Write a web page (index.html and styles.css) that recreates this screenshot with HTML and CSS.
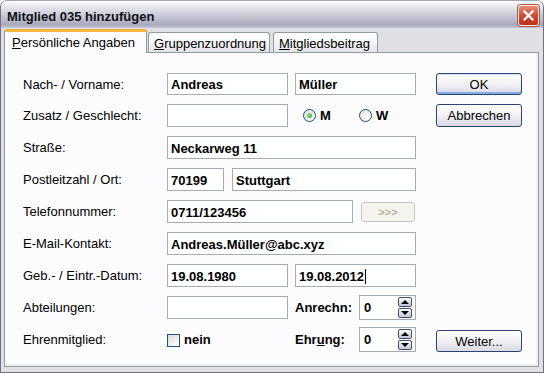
FILE: index.html
```html
<!DOCTYPE html>
<html lang="de">
<head>
    <meta charset="UTF-8">
    <title>Mitglied 035 hinzufügen</title>
    <link rel="stylesheet" href="styles.css">
</head>
<body>
<div class="window">
    <div class="titlebar">
        <span class="title">Mitglied 035 hinzufügen</span>
        <span class="close">
            <svg width="13" height="13" viewBox="0 0 13 13"><path d="M2.5 2.5L10.5 10.5M10.5 2.5L2.5 10.5" stroke="#fff" stroke-width="2.2" stroke-linecap="square"/></svg>
        </span>
    </div>
    <div class="client">
        <div class="tabs">
            <div class="tab active"><u>P</u>ersönliche Angaben</div>
            <div class="tab tab-groups"><u>G</u>ruppenzuordnung</div>
            <div class="tab tab-fee"><u>M</u>itgliedsbeitrag</div>
        </div>
        <div class="panel">
            <div class="form">
                <div class="row first">
                    <span class="label">Nach- / Vorname:</span>
                    <div class="fields">
                        <span class="field half">Andreas</span>
                        <span class="field half">Müller</span>
                    </div>
                </div>
                <div class="row">
                    <span class="label">Zusatz / Geschlecht:</span>
                    <div class="fields">
                        <span class="field half"></span>
                        <span class="radio-group">
                            <span class="option option-m"><span class="radio checked"></span>M</span>
                            <span class="option"><span class="radio"></span>W</span>
                        </span>
                    </div>
                </div>
                <div class="row">
                    <span class="label">Straße:</span>
                    <div class="fields"><span class="field full">Neckarweg 11</span></div>
                </div>
                <div class="row">
                    <span class="label">Postleitzahl / Ort:</span>
                    <div class="fields gap8">
                        <span class="field zip">70199</span>
                        <span class="field city">Stuttgart</span>
                    </div>
                </div>
                <div class="row">
                    <span class="label">Telefonnummer:</span>
                    <div class="fields gap8">
                        <span class="field phone">0711/123456</span>
                        <span class="mini-btn">&gt;&gt;&gt;</span>
                    </div>
                </div>
                <div class="row">
                    <span class="label">E-Mail-Kontakt:</span>
                    <div class="fields"><span class="field full">Andreas.Müller@abc.xyz</span></div>
                </div>
                <div class="row">
                    <span class="label">Geb.- / Eintr.-Datum:</span>
                    <div class="fields">
                        <span class="field half">19.08.1980</span>
                        <span class="field half">19.08.2012<span class="caret"></span></span>
                    </div>
                </div>
                <div class="row">
                    <span class="label">Abteilungen:</span>
                    <div class="fields tight">
                        <span class="cell"><span class="field half"></span></span>
                        <span class="side-label">Anrechn:</span>
                        <span class="spin">0<span class="arrows"><span class="arrow up"></span><span class="arrow down"></span></span></span>
                    </div>
                </div>
                <div class="row">
                    <span class="label">Ehrenmitglied:</span>
                    <div class="fields tight">
                        <span class="cell"><span class="checkbox"></span><b>nein</b></span>
                        <span class="side-label">Ehr<u>u</u>ng:</span>
                        <span class="spin">0<span class="arrows"><span class="arrow up"></span><span class="arrow down"></span></span></span>
                    </div>
                </div>
            </div>
            <div class="buttons">
                <span class="btn default">OK</span>
                <span class="btn">Abbrechen</span>
                <span class="btn next">Weiter...</span>
            </div>
        </div>
    </div>
</div>
</body>
</html>
```

FILE: styles.css
```css
* {
    box-sizing: border-box;
}
body {
    margin: 0;
    font-family: "Liberation Sans", Arial, sans-serif;
    font-size: 13px;
    color: #000;
    background: #fff;
}
.window {
    width: 544px;
    height: 373px;
    display: flex;
    flex-direction: column;
    background: #e0dfe3;
    border: 1px solid #6f6f86;
    border-top-color: #a4a4b6;
    border-radius: 7px 7px 0 0;
    overflow: hidden;
}
.titlebar {
    height: 27px;
    flex: none;
    display: flex;
    align-items: flex-start;
    justify-content: space-between;
    padding: 0 4px 0 6px;
    background: linear-gradient(#fdfdfe, #e6e6ed 22%, #c6c6d3 58%, #a9a9bc 88%, #c6c6d3);
}
.title {
    font-weight: bold;
    color: #101018;
    margin-top: 9px;
    line-height: 14px;
}
.close {
    width: 21px;
    height: 21px;
    margin-top: 4px;
    border: 1px solid #fbe6e0;
    border-radius: 3px;
    background: linear-gradient(#e78e79, #cf4c36 50%, #b9301d);
    box-shadow: 0 0 0 1px #b65242;
    display: flex;
    align-items: center;
    justify-content: center;
}
.client {
    flex: 1;
    display: flex;
    flex-direction: column;
    padding: 1px 4px 5px 3px;
}
.tabs {
    height: 23px;
    display: flex;
    align-items: flex-end;
}
.tab {
    height: 20px;
    display: flex;
    align-items: center;
    padding: 1px 0 0 5px;
    border: 1px solid #919b9c;
    border-bottom: none;
    border-radius: 3px 3px 0 0;
    background: linear-gradient(#fff, #f3f3f6 60%, #e2e2e8);
}
.tab.active {
    width: 143px;
    height: 24px;
    margin-bottom: -1px;
    padding: 0 0 0 7px;
    border-top: 3px solid #f0b63e;
    background: #fcfcfe;
    position: relative;
}
.tab-groups {
    width: 122px;
    margin-left: 1px;
}
.tab-fee {
    width: 105px;
    margin-left: 3px;
}
.panel {
    flex: 1;
    display: flex;
    align-items: stretch;
    padding: 20px 0 0 18px;
    background: #fcfcfe;
    border: 1px solid #919b9c;
    box-shadow: inset -2px -2px 0 #efeff3;
}
.form {
    display: flex;
    flex-direction: column;
    gap: 9px;
}
.row {
    height: 23px;
    display: flex;
    align-items: center;
}
.row.first {
    height: 22px;
}
.label {
    width: 144px;
    flex: none;
}
.fields {
    width: 249px;
    height: 100%;
    display: flex;
    align-items: center;
    gap: 7px;
}
.fields.gap8 {
    gap: 8px;
}
.fields.tight {
    gap: 0;
}
.field {
    height: 100%;
    display: flex;
    align-items: center;
    padding: 1px 3px 0;
    border: 1px solid #a5acb5;
    background: #fff;
    font-weight: bold;
    white-space: nowrap;
}
.half {
    width: 121px;
}
.full {
    width: 249px;
}
.zip {
    width: 57px;
}
.city {
    width: 184px;
}
.phone {
    width: 186px;
}
.caret {
    width: 1px;
    height: 15px;
    margin-left: 1px;
    background: #000;
}
.mini-btn {
    width: 54px;
    height: 20px;
    display: flex;
    align-items: center;
    justify-content: center;
    border: 1px solid #cac8bb;
    border-radius: 3px;
    background: #f4f3ee;
    color: #b3b0a2;
    font-size: 11px;
    font-weight: bold;
}
.radio-group {
    display: flex;
    align-items: center;
    margin-left: 8px;
    font-weight: bold;
}
.option {
    display: flex;
    align-items: center;
    gap: 4px;
}
.option-m {
    width: 56px;
}
.radio {
    width: 13px;
    height: 13px;
    border: 1px solid #1c5180;
    border-radius: 50%;
    background: radial-gradient(circle at 65% 65%, #fff, #dcdbd5);
    display: flex;
    align-items: center;
    justify-content: center;
}
.radio.checked::after {
    content: "";
    width: 5px;
    height: 5px;
    border-radius: 50%;
    background: radial-gradient(circle at 35% 35%, #8ae98a, #21a121);
}
.cell {
    width: 128px;
    height: 100%;
    flex: none;
    display: flex;
    align-items: center;
}
.checkbox {
    width: 13px;
    height: 13px;
    margin: 2px 4px 0 0;
    border: 1px solid #1c5180;
    background: linear-gradient(135deg, #dcdbd5, #fff);
}
.side-label {
    width: 64px;
    flex: none;
    font-weight: bold;
}
.spin {
    width: 57px;
    height: 25px;
    flex: none;
    display: flex;
    align-items: center;
    justify-content: space-between;
    padding: 0 3px 0 4px;
    border: 1px solid #a5acb5;
    background: #fff;
    font-weight: bold;
}
.arrows {
    display: flex;
    flex-direction: column;
    gap: 1px;
}
.arrow {
    width: 14px;
    height: 10px;
    display: flex;
    align-items: center;
    justify-content: center;
    border: 1px solid #3d4e6e;
    border-radius: 2px;
    background: linear-gradient(#fdfdfe, #c4c8d6);
}
.arrow.up::after {
    content: "";
    border-left: 4px solid transparent;
    border-right: 4px solid transparent;
    border-bottom: 4px solid #000;
}
.arrow.down::after {
    content: "";
    border-left: 4px solid transparent;
    border-right: 4px solid transparent;
    border-top: 4px solid #000;
}
.buttons {
    width: 86px;
    margin-left: 20px;
    display: flex;
    flex-direction: column;
    gap: 9px;
    height: 279px;
}
.btn {
    height: 23px;
    display: flex;
    align-items: center;
    justify-content: center;
    border: 1px solid #2b4470;
    border-radius: 3px;
    background: linear-gradient(#fff, #f3f3f6 45%, #d9d9e5);
}
.btn.default {
    height: 22px;
    box-shadow: inset 0 -2px 0 #88aae6, inset 0 1px 0 #d6e4fb;
}
.btn.next {
    height: 22px;
    margin-top: auto;
}
```
